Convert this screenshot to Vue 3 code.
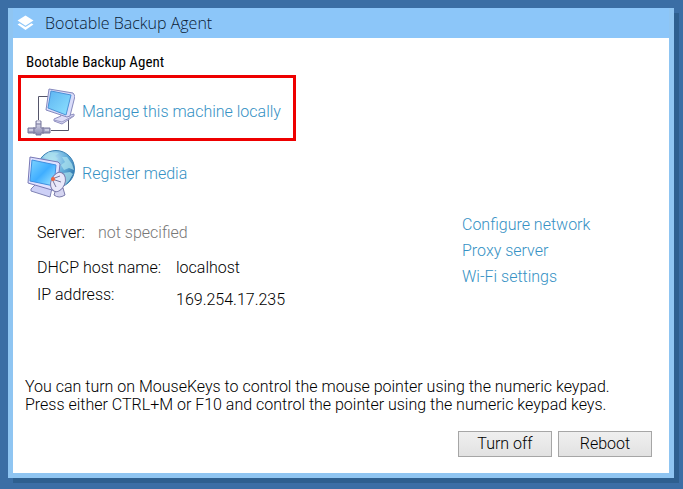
<template>
    <main class="desktop">
        <section class="window">
            <header class="titlebar">
                <svg class="logo" viewBox="0 0 16 16" aria-hidden="true">
                    <path d="M8 0.5 L15.5 5.2 L8 10 L0.5 5.2 Z" />
                    <path d="M0.5 9 L2.4 7.7 L8 11.3 L13.6 7.7 L15.5 9 L8 14.2 Z" />
                </svg>
                <span>Bootable Backup Agent</span>
            </header>

            <div class="content">
                <h1>Bootable Backup Agent</h1>

                <a href="#" class="action highlighted">
                    <svg class="action-icon" viewBox="0 0 48 48" aria-hidden="true">
                        <defs>
                            <linearGradient id="screen-a" x1="0" y1="0" x2="1" y2="1">
                                <stop offset="0" stop-color="#5db4f2" />
                                <stop offset="1" stop-color="#8ee2ff" />
                            </linearGradient>
                            <linearGradient id="pipe" x1="0" y1="0" x2="0" y2="1">
                                <stop offset="0" stop-color="#e8e8f4" />
                                <stop offset="1" stop-color="#8585ae" />
                            </linearGradient>
                        </defs>
                        <path d="M22 8.5 H11.5 V32 M24 42.5 H41.5 V30" fill="none" stroke="#55556a" />
                        <path d="M33 24 L40 26 L40 28 L47 26 L47 28 L35 36 L27 33 L27 31 L34 28 Z" fill="#dddcf7" stroke="#8f8fc0" />
                        <path d="M27 32 L35 34 L46 28" fill="none" stroke="#9a9ac6" />
                        <path d="M22 1 L46 5 L48 8 L43 28 L40 29 L19 22 Z" fill="#d9dcfa" stroke="#8689bd" />
                        <path d="M24 3 L44 7 L39 27 L21 20 Z" fill="url(#screen-a)" stroke="#4b91d7" />
                        <path d="M9 33 H14 V40 H23 V45 H14 V47 H9 V45 H1 V40 H9 Z" fill="url(#pipe)" stroke="#77779c" />
                        <path d="M7 39 V46 M16 39 V46 M9 36 H14" stroke="#77779c" />
                        <path d="M10 34 h3 M2 42 h4 M18 42 h4" stroke="#f0f0fb" />
                    </svg>
                    <span>Manage this machine locally</span>
                </a>

                <a href="#" class="action">
                    <svg class="action-icon" viewBox="0 0 48 48" aria-hidden="true">
                        <defs>
                            <radialGradient id="globe" cx="0.4" cy="0.25" r="0.8">
                                <stop offset="0" stop-color="#c0e5fa" />
                                <stop offset="0.5" stop-color="#65afdb" />
                                <stop offset="1" stop-color="#1c649e" />
                            </radialGradient>
                            <linearGradient id="screen-b" x1="0" y1="0" x2="1" y2="1">
                                <stop offset="0" stop-color="#7dd4ff" />
                                <stop offset="0.5" stop-color="#40aeff" />
                                <stop offset="1" stop-color="#a9ecff" />
                            </linearGradient>
                        </defs>
                        <circle cx="29" cy="19" r="18.5" fill="url(#globe)" stroke="#3b80b3" />
                        <path d="M16 7 L22 2 L32 3 L28 6 L31 9 L26 12 L20 9 Z M35 7 L40 7 L45 14 L47 20 L42 18 L37 20 L34 15 L38 12 Z M36 23 L43 22 L46 24 L42 31 L38 35 Z" fill="#a9e0ed" opacity="0.75" />
                        <path d="M9 34 L25 38 L23 47 L4 41 L4 39 Z" fill="#cdd0f6" stroke="#7f83b5" />
                        <path d="M3 7 L31 12 L33 14 L30 39 L25 40 L1 33 Z" fill="#dfe1ff" stroke="#7778b6" />
                        <path d="M5 10 L29 15 L27 36 L3 31 Z" fill="url(#screen-b)" stroke="#3f8fe0" />
                        <path d="M29 39 L27 45 Q32 49 38 45 L36 38 Z" fill="#d5d5f1" stroke="#7a7aaa" />
                        <ellipse cx="31" cy="32" rx="7" ry="10" transform="rotate(22 31 32)" fill="#e9e8fa" stroke="#7b7bac" />
                        <path d="M25 29 L33 26 M25 29 L34 32 M25 29 L29 37" fill="none" stroke="#75759a" />
                        <circle cx="26" cy="29" r="2" fill="#ee6540" />
                    </svg>
                    <span>Register media</span>
                </a>

                <div class="details">
                    <dl class="server">
                        <dt>Server:</dt>
                        <dd class="muted">not specified</dd>
                    </dl>
                    <dl class="network">
                        <dt>DHCP host name:</dt>
                        <dd>localhost</dd>
                        <dt>IP address:</dt>
                        <dd class="address">169.254.17.235</dd>
                    </dl>
                    <nav class="settings">
                        <a v-for="item in settings" :key="item" href="#">{{ item }}</a>
                    </nav>
                </div>

                <p class="hint">
                    You can turn on MouseKeys to control the mouse pointer using the numeric keypad.<br>
                    Press either CTRL+M or F10 and control the pointer using the numeric keypad keys.
                </p>

                <footer class="buttons">
                    <button type="button">Turn off</button>
                    <button type="button">Reboot</button>
                </footer>
            </div>
        </section>
    </main>
</template>

<script setup>
const settings = ['Configure network', 'Proxy server', 'Wi-Fi settings']
</script>

<style>
body {
    margin: 0;
    background: #3b6ea5;
}
</style>

<style scoped>
.desktop {
    padding: 8px 9px 11px 8px;
    font-family: Roboto, "Liberation Sans", Arial, sans-serif;
    font-size: 16px;
    font-weight: 300;
    line-height: 18px;
    color: #000;
}

.window {
    border: 5px solid #8fc5f2;
    border-top: 0;
    background: #fff;
    box-shadow: 5px 5px 0 #2e5f8f;
}

.titlebar {
    display: flex;
    align-items: center;
    gap: 11px;
    height: 30px;
    padding-left: 4px;
    background: #8cc6f9;
    font-family: "Open Sans", sans-serif;
    color: #0a2033;
}

.logo {
    width: 17px;
    height: 17px;
    fill: #fff;
}

.content {
    padding: 15px 17px 16px 5px;
}

h1 {
    margin: 0 0 4px 8px;
    font-family: "Liberation Sans Narrow", "Roboto Condensed", "Liberation Sans", sans-serif;
    font-size: 15px;
    font-weight: 400;
}

a {
    color: #3591c4;
    text-decoration: none;
}

.action {
    display: flex;
    align-items: center;
    gap: 7px;
    width: 266px;
    height: 60px;
    padding-left: 6px;
    border: 3px solid transparent;
}

.action.highlighted {
    height: 52px;
    padding-top: 8px;
    border-color: #ee0000;
}

.action-icon {
    width: 48px;
    height: 48px;
}

.details {
    display: grid;
    grid-template-columns: 1fr 190px;
    margin: 17px 0 0 19px;
}

dl {
    display: grid;
    margin: 0;
}

dd {
    margin: 0;
}

.server {
    grid-template-columns: 61px 1fr;
}

.network {
    grid-template-columns: 139px 1fr;
    grid-column: 1;
    row-gap: 9px;
    margin-top: 17px;
}

.address {
    padding-top: 5px;
}

.muted {
    color: #777;
}

.settings {
    display: flex;
    flex-direction: column;
    gap: 8px;
    grid-area: 1 / 2 / 3 / 3;
    margin-top: -8px;
}

.hint {
    margin: 69px 0 0 7px;
}

.buttons {
    display: flex;
    justify-content: flex-end;
    gap: 6px;
    margin-top: 17px;
}

button {
    width: 94px;
    height: 26px;
    padding: 0;
    border: 1px solid #a6a6a6;
    background: linear-gradient(#efefef, #e2e2e2);
    color: #000;
    font: inherit;
}
</style>
